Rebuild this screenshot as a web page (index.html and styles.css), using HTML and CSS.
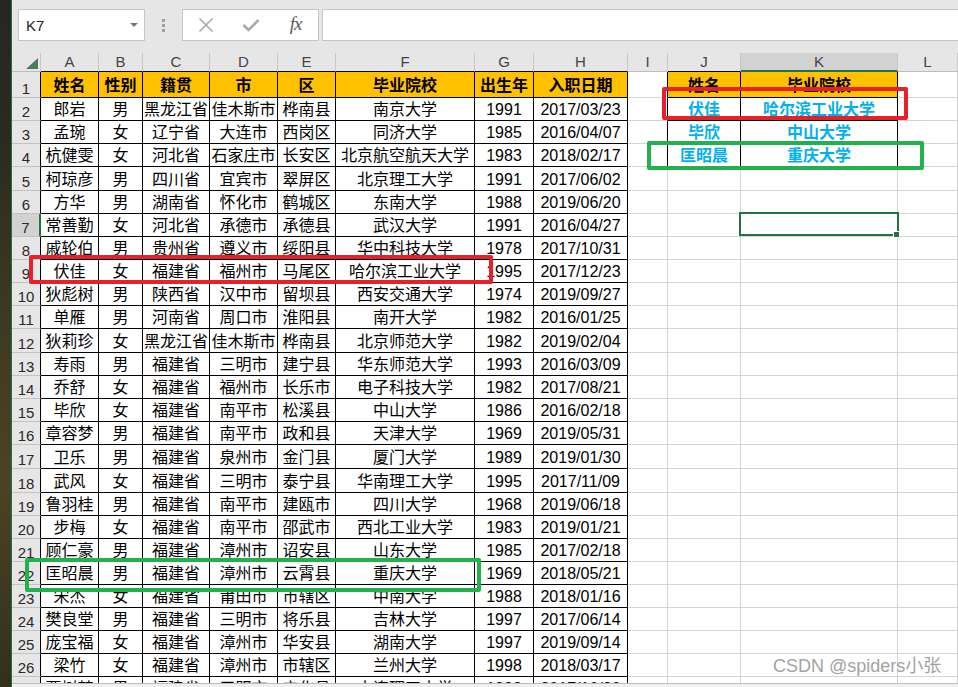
FILE: index.html
```html
<!DOCTYPE html>
<html lang="zh">
<head>
<meta charset="utf-8">
<title>Excel</title>
<link rel="stylesheet" href="styles.css">
</head>
<body>
<div class="desk"></div>
<div class="win">
  <div class="fbar">
    <div class="namebox"><span>K7</span><i class="dd"></i></div>
    <div class="grip"><i></i><i></i><i></i></div>
    <div class="fbtns">
      <span><svg width="16" height="16" viewBox="0 0 16 16"><path d="M1.5 1.5L14.5 14.5M14.5 1.5L1.5 14.5" stroke="#a9a9a9" stroke-width="1.6" fill="none"/></svg></span>
      <span><svg width="18" height="14" viewBox="0 0 18 14"><path d="M1.5 7L6.5 12L16.5 2" stroke="#a9a9a9" stroke-width="2.6" fill="none"/></svg></span>
      <span class="fx">fx</span>
    </div>
    <div class="finput"></div>
  </div>
  <div class="sheet">
    <div class="row colhdr"><div class="corner"><i></i></div><div>A</div><div>B</div><div>C</div><div>D</div><div>E</div><div>F</div><div>G</div><div>H</div><div>I</div><div>J</div><div class="csel">K</div><div>L</div></div>
    <div class="row t26 data jk hd"><div class="rh">1</div><div>姓名</div><div>性别</div><div>籍贯</div><div>市</div><div>区</div><div>毕业院校</div><div>出生年</div><div>入职日期</div><div></div><div>姓名</div><div>毕业院校</div><div></div></div>
    <div class="row data jk"><div class="rh">2</div><div>郎岩</div><div>男</div><div>黑龙江省</div><div>佳木斯市</div><div>桦南县</div><div>南京大学</div><div>1991</div><div>2017/03/23</div><div></div><div>伏佳</div><div>哈尔滨工业大学</div><div></div></div>
    <div class="row data jk"><div class="rh">3</div><div>孟琬</div><div>女</div><div>辽宁省</div><div>大连市</div><div>西岗区</div><div>同济大学</div><div>1985</div><div>2016/04/07</div><div></div><div>毕欣</div><div>中山大学</div><div></div></div>
    <div class="row data jk"><div class="rh">4</div><div>杭健雯</div><div>女</div><div>河北省</div><div>石家庄市</div><div>长安区</div><div>北京航空航天大学</div><div>1983</div><div>2018/02/17</div><div></div><div>匡昭晨</div><div>重庆大学</div><div></div></div>
    <div class="row t24 data"><div class="rh">5</div><div>柯琼彦</div><div>男</div><div>四川省</div><div>宜宾市</div><div>翠屏区</div><div>北京理工大学</div><div>1991</div><div>2017/06/02</div><div></div><div></div><div></div><div></div></div>
    <div class="row data"><div class="rh">6</div><div>方华</div><div>男</div><div>湖南省</div><div>怀化市</div><div>鹤城区</div><div>东南大学</div><div>1988</div><div>2019/06/20</div><div></div><div></div><div></div><div></div></div>
    <div class="row data"><div class="rh sel">7</div><div>常善勤</div><div>女</div><div>河北省</div><div>承德市</div><div>承德县</div><div>武汉大学</div><div>1991</div><div>2016/04/27</div><div></div><div></div><div class="cur"></div><div></div></div>
    <div class="row data"><div class="rh">8</div><div>戚轮伯</div><div>男</div><div>贵州省</div><div>遵义市</div><div>绥阳县</div><div>华中科技大学</div><div>1978</div><div>2017/10/31</div><div></div><div></div><div></div><div></div></div>
    <div class="row data"><div class="rh">9</div><div>伏佳</div><div>女</div><div>福建省</div><div>福州市</div><div>马尾区</div><div>哈尔滨工业大学</div><div>1995</div><div>2017/12/23</div><div></div><div></div><div></div><div></div></div>
    <div class="row data"><div class="rh">10</div><div>狄彪树</div><div>男</div><div>陕西省</div><div>汉中市</div><div>留坝县</div><div>西安交通大学</div><div>1974</div><div>2019/09/27</div><div></div><div></div><div></div><div></div></div>
    <div class="row data"><div class="rh">11</div><div>单雁</div><div>男</div><div>河南省</div><div>周口市</div><div>淮阳县</div><div>南开大学</div><div>1982</div><div>2016/01/25</div><div></div><div></div><div></div><div></div></div>
    <div class="row t24 data"><div class="rh">12</div><div>狄莉珍</div><div>女</div><div>黑龙江省</div><div>佳木斯市</div><div>桦南县</div><div>北京师范大学</div><div>1982</div><div>2019/02/04</div><div></div><div></div><div></div><div></div></div>
    <div class="row data"><div class="rh">13</div><div>寿雨</div><div>男</div><div>福建省</div><div>三明市</div><div>建宁县</div><div>华东师范大学</div><div>1993</div><div>2016/03/09</div><div></div><div></div><div></div><div></div></div>
    <div class="row data"><div class="rh">14</div><div>乔舒</div><div>女</div><div>福建省</div><div>福州市</div><div>长乐市</div><div>电子科技大学</div><div>1982</div><div>2017/08/21</div><div></div><div></div><div></div><div></div></div>
    <div class="row data"><div class="rh">15</div><div>毕欣</div><div>女</div><div>福建省</div><div>南平市</div><div>松溪县</div><div>中山大学</div><div>1986</div><div>2016/02/18</div><div></div><div></div><div></div><div></div></div>
    <div class="row data"><div class="rh">16</div><div>章容梦</div><div>男</div><div>福建省</div><div>南平市</div><div>政和县</div><div>天津大学</div><div>1969</div><div>2019/05/31</div><div></div><div></div><div></div><div></div></div>
    <div class="row t24 data"><div class="rh">17</div><div>卫乐</div><div>男</div><div>福建省</div><div>泉州市</div><div>金门县</div><div>厦门大学</div><div>1989</div><div>2019/01/30</div><div></div><div></div><div></div><div></div></div>
    <div class="row t24 data"><div class="rh">18</div><div>武风</div><div>女</div><div>福建省</div><div>三明市</div><div>泰宁县</div><div>华南理工大学</div><div>1995</div><div>2017/11/09</div><div></div><div></div><div></div><div></div></div>
    <div class="row data"><div class="rh">19</div><div>鲁羽桂</div><div>男</div><div>福建省</div><div>南平市</div><div>建瓯市</div><div>四川大学</div><div>1968</div><div>2019/06/18</div><div></div><div></div><div></div><div></div></div>
    <div class="row data"><div class="rh">20</div><div>步梅</div><div>女</div><div>福建省</div><div>南平市</div><div>邵武市</div><div>西北工业大学</div><div>1983</div><div>2019/01/21</div><div></div><div></div><div></div><div></div></div>
    <div class="row data"><div class="rh">21</div><div>顾仁豪</div><div>男</div><div>福建省</div><div>漳州市</div><div>诏安县</div><div>山东大学</div><div>1985</div><div>2017/02/18</div><div></div><div></div><div></div><div></div></div>
    <div class="row data"><div class="rh">22</div><div>匡昭晨</div><div>男</div><div>福建省</div><div>漳州市</div><div>云霄县</div><div>重庆大学</div><div>1969</div><div>2018/05/21</div><div></div><div></div><div></div><div></div></div>
    <div class="row data"><div class="rh">23</div><div>宋杰</div><div>女</div><div>福建省</div><div>莆田市</div><div>市辖区</div><div>中南大学</div><div>1988</div><div>2018/01/16</div><div></div><div></div><div></div><div></div></div>
    <div class="row data"><div class="rh">24</div><div>樊良堂</div><div>男</div><div>福建省</div><div>三明市</div><div>将乐县</div><div>吉林大学</div><div>1997</div><div>2017/06/14</div><div></div><div></div><div></div><div></div></div>
    <div class="row data"><div class="rh">25</div><div>庞宝福</div><div>女</div><div>福建省</div><div>漳州市</div><div>华安县</div><div>湖南大学</div><div>1997</div><div>2019/09/14</div><div></div><div></div><div></div><div></div></div>
    <div class="row data"><div class="rh">26</div><div>梁竹</div><div>女</div><div>福建省</div><div>漳州市</div><div>市辖区</div><div>兰州大学</div><div>1998</div><div>2018/03/17</div><div></div><div></div><div></div><div></div></div>
    <div class="row data"><div class="rh">27</div><div>贾树梦</div><div>男</div><div>福建省</div><div>三明市</div><div>宁化县</div><div>大连理工大学</div><div>1993</div><div>2017/10/30</div><div></div><div></div><div></div><div></div></div>
  </div>
  <div class="status"></div>
</div>
<div class="mark red m1"></div>
<div class="mark red m2"></div>
<div class="mark green m3"></div>
<div class="mark green m4"></div>
<div class="wm">CSDN @spiders小张</div>
</body>
</html>
```

FILE: styles.css
```css
html, body {
  margin: 0;
  padding: 0;
}
body {
  width: 958px;
  height: 687px;
  overflow: hidden;
  display: flex;
  background: #e6e6e6;
  font-family: "Liberation Sans", "Noto Sans CJK SC", sans-serif;
  position: relative;
}
.desk {
  width: 11px;
  flex: none;
  background: linear-gradient(180deg, #262626 0%, #2b2a1e 20%, #3d3822 45%, #4a4326 70%, #332f1d 100%);
}
.win {
  flex: 1;
  min-width: 0;
  border-left: 1px solid #217346;
  display: flex;
  flex-direction: column;
}
.fbar {
  flex: none;
  height: 53px;
  box-sizing: border-box;
  padding-top: 9px;
  display: flex;
  align-items: flex-start;
  background: #e6e6e6;
}
.namebox {
  margin-left: 6px;
  width: 127px;
  height: 32px;
  box-sizing: border-box;
  border: 1px solid #c6c6c6;
  background: #fff;
  display: flex;
  align-items: center;
  padding-left: 7px;
  font-size: 15px;
  color: #222;
}
.dd {
  margin-left: auto;
  margin-right: 6px;
  width: 0;
  height: 0;
  border-left: 4px solid transparent;
  border-right: 4px solid transparent;
  border-top: 4px solid #777;
}
.grip {
  width: 37px;
  height: 32px;
  display: flex;
  flex-direction: column;
  align-items: center;
  justify-content: center;
  gap: 2px;
}
.grip i {
  width: 3px;
  height: 3px;
  background: #a0a0a0;
}
.fbtns {
  width: 137px;
  height: 32px;
  box-sizing: border-box;
  border: 1px solid #c6c6c6;
  background: #fff;
  display: flex;
}
.fbtns > span {
  width: 45px;
  display: flex;
  align-items: center;
  justify-content: center;
}
.fx {
  font-family: "Liberation Serif", serif;
  font-style: italic;
  font-size: 19px;
  color: #5c5c5c;
  letter-spacing: -1px;
  padding-bottom: 2px;
}
.finput {
  flex: 1;
  margin-left: 3px;
  height: 32px;
  box-sizing: border-box;
  border: 1px solid #c6c6c6;
  border-right: none;
  background: #fff;
}
.sheet {
  flex: none;
  height: 630px;
  overflow: hidden;
  background: #fff;
}
.status {
  flex: 1;
  border-top: 1px solid #bcbcbc;
  background: #f0f0f0;
}
.row {
  display: grid;
  grid-template-columns: 29px 58px 44px 67px 68px 58px 139px 59px 94px 40px 73px 157px 1fr;
  height: 23px;
  font-size: 16px;
  color: #000;
}
.row.t24 { height: 24px; }
.row.t26 { height: 26px; }
.row > div {
  box-sizing: border-box;
  border-right: 1px solid #d4d4d4;
  border-bottom: 1px solid #d4d4d4;
  display: flex;
  align-items: center;
  justify-content: center;
  white-space: nowrap;
  overflow: hidden;
  padding-top: 2px;
  line-height: 18px;
}
.row > .rh {
  background: #e6e6e6;
  border-right-color: #000;
  border-bottom-color: #c2c2c2;
  align-items: flex-end;
  font-size: 15px;
  line-height: 15px;
  color: #2a2a2a;
  padding: 0 0 1px;
}
.row > .rh.sel {
  background: #d2d2d2;
  border-right: 2px solid #217346;
}
.data > div:nth-child(n+2):nth-child(-n+9) {
  border-color: #000;
}
.jk > div:nth-child(10) {
  border-right-color: #000;
}
.jk > div:nth-child(11),
.jk > div:nth-child(12) {
  border-color: #000;
  color: #00b0f0;
  font-weight: bold;
}
.hd > div:nth-child(n+2):nth-child(-n+9),
.hd > div:nth-child(11),
.hd > div:nth-child(12) {
  background: #ffc000;
  color: #000;
  font-weight: bold;
}
.colhdr {
  height: 19px;
}
.colhdr > div {
  background: #e6e6e6;
  border-right-color: #c8c8c8;
  border-bottom-color: #bdbdbd;
  font-size: 15px;
  line-height: 16px;
  color: #444;
  padding-top: 0;
}
.colhdr > div:nth-child(n+2):nth-child(-n+9),
.colhdr > div:nth-child(11) {
  border-bottom-color: #000;
}
.colhdr > .csel {
  background: #d2d2d2;
  border-bottom: 2px solid #217346;
}
.colhdr > .corner {
  align-items: flex-end;
  justify-content: flex-end;
  padding: 0 2px 2px 0;
  border-right-color: #c8c8c8;
}
.corner i {
  width: 0;
  height: 0;
  border-left: 12px solid transparent;
  border-bottom: 11px solid #4a7d5a;
}
.row > .cur {
  position: relative;
  overflow: visible;
  z-index: 2;
}
.cur::before {
  content: "";
  position: absolute;
  left: -2px;
  right: -2px;
  top: -2px;
  bottom: 0;
  border: 2px solid #217346;
}
.cur::after {
  content: "";
  position: absolute;
  right: -3px;
  bottom: -2px;
  width: 5px;
  height: 5px;
  background: #217346;
  border: 1px solid #fff;
}
.mark {
  position: absolute;
  box-sizing: border-box;
  border: 4px solid;
  border-radius: 2px;
  z-index: 5;
}
.red { border-color: #e8202a; }
.green { border-color: #22b14c; }
.m1 { left: 29px; top: 255px; width: 464px; height: 29px; }
.m2 { left: 662px; top: 87px; width: 246px; height: 33px; }
.m3 { left: 25px; top: 558px; width: 456px; height: 34px; }
.m4 { left: 647px; top: 141px; width: 277px; height: 29px; }
.wm {
  position: absolute;
  left: 773px;
  top: 657px;
  font-size: 18px;
  line-height: 18px;
  color: #a3a3a3;
  white-space: nowrap;
  z-index: 6;
}
```
